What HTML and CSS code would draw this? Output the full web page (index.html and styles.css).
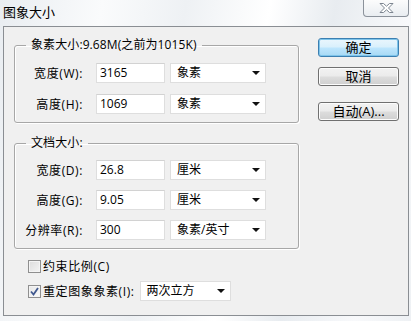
FILE: index.html
```html
<!DOCTYPE html>
<html lang="zh-CN">
<head>
  <meta charset="UTF-8" />
  <title>图象大小</title>
  <link rel="stylesheet" href="styles.css">
</head>
<body>

<div class="window">
  <div class="titlebar">
    <span class="title">图象大小</span>
    <div class="close">
      <svg width="15" height="10" viewBox="0 0 15 10">
        <polygon points="1,0.5 4.5,0.5 7.5,3.2 10.5,0.5 14,0.5 9.5,5 14,9.5 10.5,9.5 7.5,6.8 4.5,9.5 1,9.5 5.5,5" fill="#fff" stroke="#7c8590" stroke-width="1" />
      </svg>
    </div>
  </div>

  <div class="client">
    <div class="main">
      <fieldset class="group">
        <legend>象素大小:9.68M(之前为1015K)</legend>
        <div class="row">
          <label>宽度(W):</label>
          <div class="field">3165</div>
          <div class="select">象素<span class="arrow"></span></div>
        </div>
        <div class="row">
          <label>高度(H):</label>
          <div class="field">1069</div>
          <div class="select">象素<span class="arrow"></span></div>
        </div>
      </fieldset>

      <fieldset class="group doc">
        <legend>文档大小:</legend>
        <div class="row">
          <label>宽度(D):</label>
          <div class="field">26.8</div>
          <div class="select">厘米<span class="arrow"></span></div>
        </div>
        <div class="row">
          <label>高度(G):</label>
          <div class="field">9.05</div>
          <div class="select">厘米<span class="arrow"></span></div>
        </div>
        <div class="row">
          <label>分辨率(R):</label>
          <div class="field">300</div>
          <div class="select">象素/英寸<span class="arrow"></span></div>
        </div>
      </fieldset>

      <div class="checks">
        <div class="check-row">
          <span class="checkbox"></span>
          <span class="check-label">约束比例(C)</span>
        </div>
        <div class="check-row">
          <span class="checkbox checked">
            <svg width="9" height="9" viewBox="0 0 9 9">
              <path d="M1 4.5 L3.5 7.5 L8 1" fill="none" stroke="#41598f" stroke-width="1.8" />
            </svg>
          </span>
          <span class="check-label">重定图象象素(I):</span>
          <div class="select small">两次立方<span class="arrow"></span></div>
        </div>
      </div>
    </div>

    <div class="buttons">
      <div class="btn default">确定</div>
      <div class="btn">取消</div>
      <div class="btn auto">自动(A)...</div>
    </div>
  </div>
</div>

</body>
</html>
```

FILE: styles.css
```css
body {
  margin: 0;
  padding: 0;
  font-family: "Open Sans", "Noto Sans CJK SC", sans-serif;
  font-size: 12px;
  color: #000;
  background: #e4e8ec;
}

.window {
  width: 411px;
  height: 321px;
  overflow: hidden;
  background: linear-gradient(100deg, #e9edf1 0%, #fafbfc 22%, #eef1f4 40%, #ffffff 58%, #e8ecf0 72%, #f8f9fb 88%, #eef1f4 100%);
}

.titlebar {
  height: 26px;
  display: flex;
  align-items: flex-start;
  justify-content: space-between;
}

.title {
  margin: 4px 0 0 3px;
  font-size: 13px;
  line-height: 16px;
}

.close {
  width: 44px;
  height: 17px;
  margin-top: -1px;
  margin-right: 2px;
  border: 1px solid #8b929b;
  border-top: none;
  border-radius: 0 0 4px 4px;
  background: linear-gradient(#fdfdfd, #e9edf1);
  display: flex;
  align-items: center;
  justify-content: center;
}

.client {
  margin: 0 2px 0 3px;
  height: 290px;
  box-sizing: border-box;
  border: 1px solid #8a8e93;
  background: #f0f0f0;
  display: flex;
  justify-content: space-between;
  padding: 11px 9px 0 10px;
}

.main {
  width: 285px;
}

.group {
  margin: 0;
  padding: 11px 0 8px 6px;
  width: 285px;
  box-sizing: border-box;
  border: 1px solid #a7a7a7;
  border-radius: 3px;
  box-shadow: inset 1px 1px 0 #fff, 1px 1px 0 #fff;
}

.group legend {
  margin-left: 5px;
  padding: 0 5px;
  line-height: 14px;
  letter-spacing: 0.1px;
}

.group.doc {
  margin-top: 13px;
  padding-top: 10px;
}

.row {
  display: flex;
  align-items: center;
  height: 20px;
}

.row + .row {
  margin-top: 11px;
}

.doc .row + .row {
  margin-top: 10px;
}

.row label {
  width: 75px;
  padding-right: 13px;
  box-sizing: border-box;
  text-align: right;
  letter-spacing: 0.6px;
}

.field {
  width: 69px;
  height: 20px;
  box-sizing: border-box;
  margin-right: 5px;
  padding-left: 3px;
  line-height: 18px;
  background: #fff;
  border: 1px solid #dedede;
  border-top-color: #d2d2d2;
}

.select {
  width: 96px;
  height: 20px;
  box-sizing: border-box;
  padding: 0 5px 0 6px;
  line-height: 18px;
  background: #fff;
  border: 1px solid #dedede;
  display: flex;
  align-items: center;
  justify-content: space-between;
}

.select.small {
  width: 91px;
  margin-left: 5px;
}

.arrow {
  width: 0;
  height: 0;
  border-left: 4px solid transparent;
  border-right: 4px solid transparent;
  border-top: 4px solid #111;
}

.checks {
  margin: 7px 0 0 14px;
}

.check-row {
  display: flex;
  align-items: center;
  height: 20px;
}

.check-row + .check-row {
  margin-top: 5px;
}

.checkbox {
  width: 13px;
  height: 13px;
  box-sizing: border-box;
  border: 1px solid #8f8f8f;
  background: linear-gradient(135deg, #dcdcdc, #f4f4f4);
  box-shadow: inset 0 0 0 1px #f4f4f4;
  margin-right: 2px;
  display: flex;
  align-items: center;
  justify-content: center;
}

.checkbox.checked {
  background: linear-gradient(135deg, #e6e6e6, #fbfbfb);
}

.check-label {
  letter-spacing: 0.6px;
}

.buttons {
  width: 81px;
  display: flex;
  flex-direction: column;
}

.btn {
  height: 19px;
  box-sizing: border-box;
  border: 1px solid #707070;
  border-radius: 3px;
  background: linear-gradient(#f2f2f2 0%, #ebebeb 48%, #dddddd 52%, #cfcfcf 100%);
  box-shadow: inset 0 0 0 1px #fcfcfc;
  text-align: center;
  line-height: 16px;
  font-size: 13px;
}

.btn + .btn {
  margin-top: 10px;
}

.btn.default {
  border-color: #3c7fb1;
  background: linear-gradient(#eaf6fd 0%, #d9f0fc 48%, #bee6fd 52%, #a7d9f5 100%);
  box-shadow: inset 0 0 0 1px #7ec4ea;
}

.btn.auto {
  margin-top: 16px;
}
```
